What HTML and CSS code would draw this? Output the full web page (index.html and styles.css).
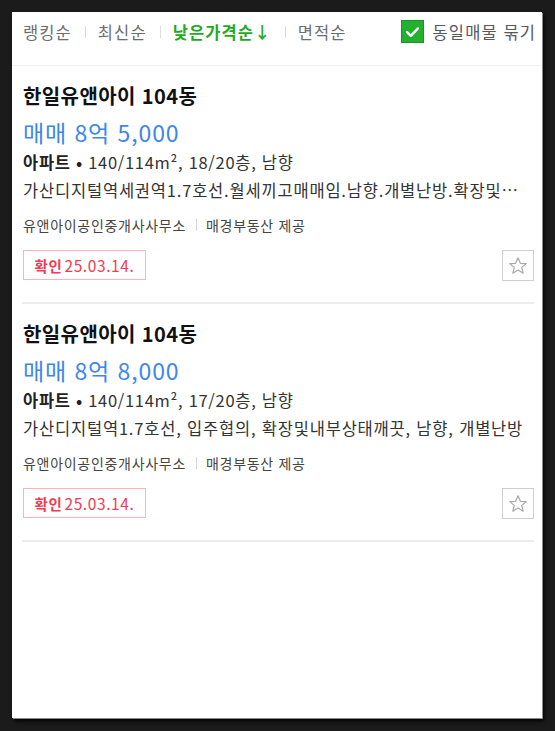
FILE: index.html
```html
<!DOCTYPE html>
<html lang="ko">
<head>
<meta charset="utf-8">
<link rel="stylesheet" href="styles.css">
</head>
<body>
<div class="panel">
  <div class="sortbar">
    <div class="sorts">
      <span class="sort">랭킹순</span>
      <span class="sep"></span>
      <span class="sort">최신순</span>
      <span class="sep"></span>
      <span class="sort active">낮은가격순↓</span>
      <span class="sep"></span>
      <span class="sort">면적순</span>
    </div>
    <label class="group">
      <span class="check"><svg width="15" height="12" viewBox="0 0 15 12"><path d="M2 6.2 L5.8 9.8 L13 2.4" fill="none" stroke="#fff" stroke-width="2.4" stroke-linecap="round" stroke-linejoin="round"/></svg></span>
      <span class="group-text">동일매물 묶기</span>
    </label>
  </div>

  <div class="item">
    <div class="title">한일유앤아이 104동</div>
    <div class="price">매매 8억 5,000</div>
    <div class="info"><b>아파트 •</b> 140/114m², 18/20층, 남향</div>
    <div class="desc">가산디지털역세권역1.7호선.월세끼고매매임.남향.개별난방.확장및…</div>
    <div class="agent"><span>유앤아이공인중개사사무소</span><span class="asep"></span><span>매경부동산 제공</span></div>
    <div class="bottom">
      <span class="badge"><span class="bl">확인</span>25.03.14.</span>
      <span class="star"><svg width="20" height="20" viewBox="0 0 20 20"><path d="M10 1.8 L12.4 7.3 L18.3 7.6 L13.7 11.4 L15.2 17.2 L10 14 L4.8 17.2 L6.3 11.4 L1.7 7.6 L7.6 7.3 Z" fill="none" stroke="#a9a9a9" stroke-width="1.2" stroke-linejoin="round"/></svg></span>
    </div>
  </div>

  <div class="item">
    <div class="title">한일유앤아이 104동</div>
    <div class="price">매매 8억 8,000</div>
    <div class="info"><b>아파트 •</b> 140/114m², 17/20층, 남향</div>
    <div class="desc">가산디지털역1.7호선, 입주협의, 확장및내부상태깨끗, 남향, 개별난방</div>
    <div class="agent"><span>유앤아이공인중개사사무소</span><span class="asep"></span><span>매경부동산 제공</span></div>
    <div class="bottom">
      <span class="badge"><span class="bl">확인</span>25.03.14.</span>
      <span class="star"><svg width="20" height="20" viewBox="0 0 20 20"><path d="M10 1.8 L12.4 7.3 L18.3 7.6 L13.7 11.4 L15.2 17.2 L10 14 L4.8 17.2 L6.3 11.4 L1.7 7.6 L7.6 7.3 Z" fill="none" stroke="#a9a9a9" stroke-width="1.2" stroke-linejoin="round"/></svg></span>
    </div>
  </div>
</div>
</body>
</html>
```

FILE: styles.css
```css
* { box-sizing: border-box; }
html, body { margin: 0; padding: 0; }
body {
  background: #1b1b1b;
  padding: 12px 13px 13px 12px;
  font-family: "Noto Sans CJK KR", "Noto Sans", sans-serif;
  color: #222;
}
.panel {
  background: #fff;
  width: 530px;
  height: 706px;
  box-shadow: 1px 1px 0 #8a8a8a, 2px 3px 4px #000;
}
.sortbar {
  height: 54px;
  display: flex;
  align-items: center;
  justify-content: space-between;
  padding: 0 6px 14px 11px;
  border-bottom: 1px solid #f1f1f1;
}
.sorts { display: flex; align-items: center; }
.sort {
  font-size: 16.5px;
  color: #6a6d72;
  letter-spacing: 1.1px;
  line-height: 20px;
}
.sort.active { color: #1faa1f; font-weight: 700; letter-spacing: 1.1px; }
.sep {
  width: 1px;
  height: 12px;
  background: #dcdcdc;
  margin: 0 12px 0 13px;
}
.group { display: flex; align-items: center; }
.check {
  width: 23px;
  height: 23px;
  background: #22b02e;
  border: 1px solid #1a9424;
  display: flex;
  align-items: center;
  justify-content: center;
  margin-right: 9px;
}
.group-text {
  font-size: 16.5px;
  color: #55585d;
  letter-spacing: 1.1px;
  line-height: 20px;
}
.item {
  margin: 0 8px 0 10px;
  padding: 17px 0 21px 1px;
  border-bottom: 2px solid #ececec;
}
.title {
  font-size: 20px;
  font-weight: 700;
  color: #111;
  line-height: 26px;
  letter-spacing: 0.4px;
}
.price {
  margin-top: 6px;
  font-size: 23px;
  color: #3d86ee;
  line-height: 34px;
  letter-spacing: 0.9px;
}
.info {
  font-size: 16.5px;
  color: #333;
  line-height: 26px;
  letter-spacing: 0.7px;
}
.info b { font-weight: 700; color: #222; }
.desc {
  font-size: 16.5px;
  color: #333;
  line-height: 30px;
  letter-spacing: 0.8px;
  white-space: nowrap;
  overflow: hidden;
}
.agent {
  margin-top: 10px;
  font-size: 14px;
  color: #444;
  line-height: 20px;
  letter-spacing: 0.7px;
  display: flex;
  align-items: center;
}
.asep {
  width: 1px;
  height: 12px;
  background: #d4d4d4;
  margin: 0 9px 0 10px;
}
.bottom {
  margin-top: 15px;
  display: flex;
  justify-content: space-between;
  align-items: flex-start;
}
.badge {
  height: 30px;
  width: 123px;
  border: 1px solid #ffb2ba;
  color: #f23a52;
  font-size: 15.5px;
  line-height: 28px;
  text-align: center;
  letter-spacing: 0.6px;
}
.bl { font-weight: 700; font-size: 14.5px; margin-right: 2px; }
.star {
  width: 32px;
  height: 31px;
  border: 1px solid #cfcfcf;
  display: flex;
  align-items: center;
  justify-content: center;
}
```
